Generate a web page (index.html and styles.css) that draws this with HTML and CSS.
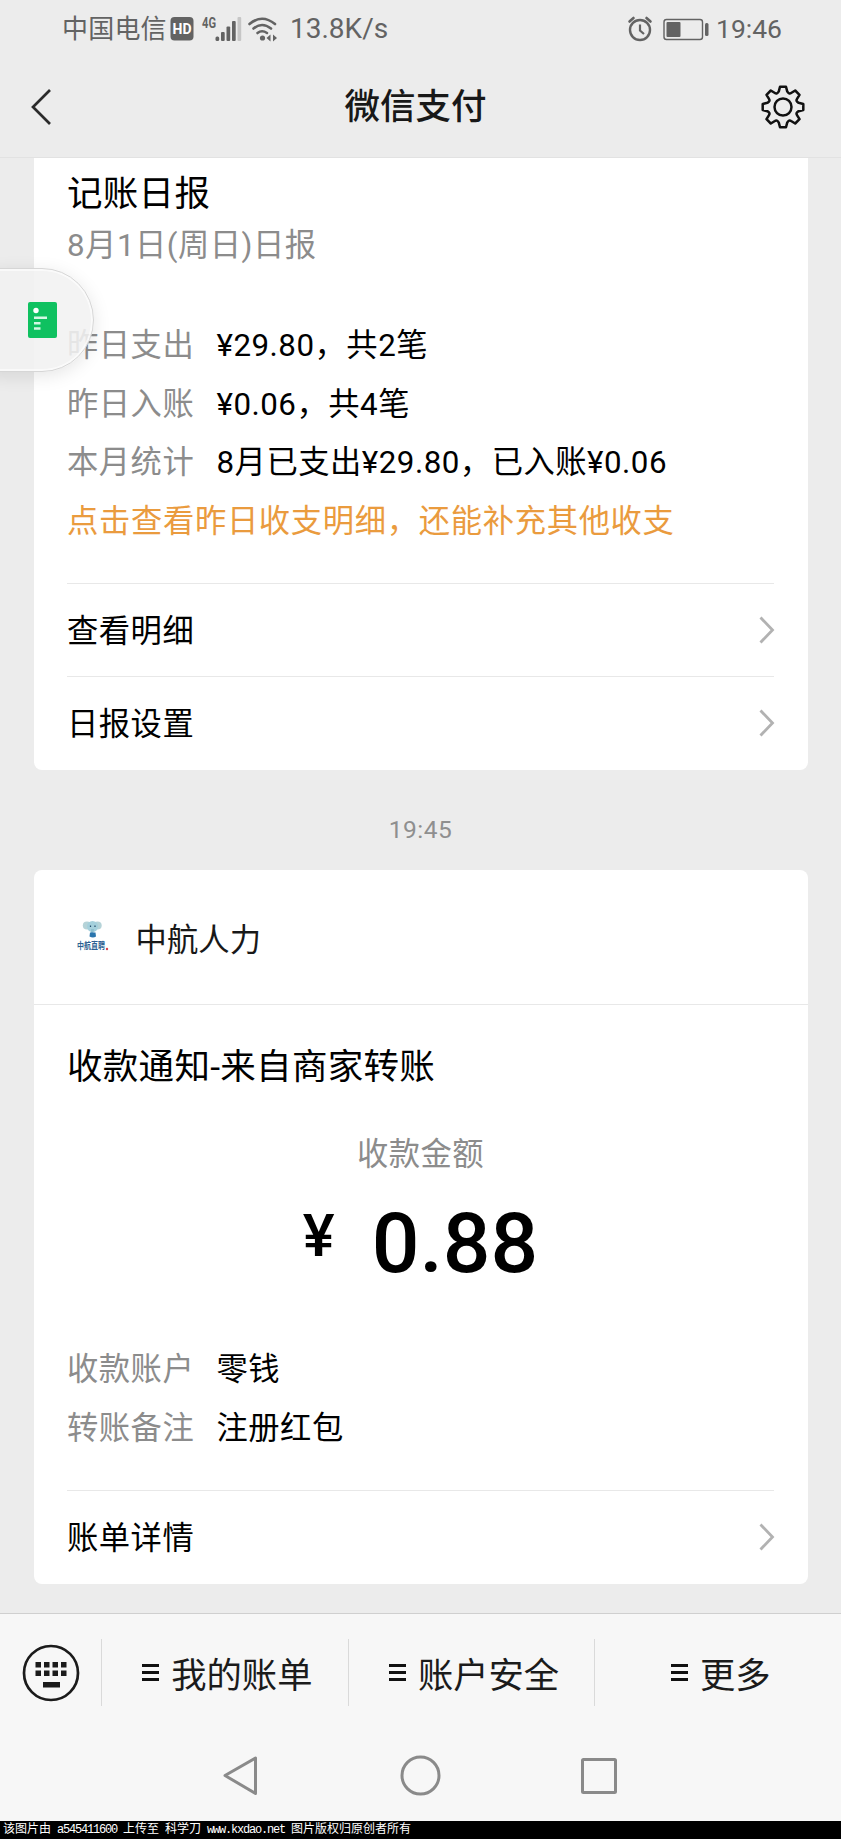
FILE: index.html
```html
<!DOCTYPE html>
<html lang="zh-CN">
<head>
<meta charset="utf-8">
<title>微信支付</title>
<link rel="stylesheet" href="styles.css">
</head>
<body>
<div class="phone">
  <div class="status">
    <span class="carrier">中国电信</span>
    <svg class="status-icons" width="112" height="28" viewBox="170 14 112 28">
      <rect x="170.500" y="16" width="23" height="23.500" rx="4" fill="#636363"/>
      <text x="182" y="33" class="hd" text-anchor="middle" textLength="19" lengthAdjust="spacingAndGlyphs">HD</text>
      <text x="202" y="27" class="g4" textLength="14" lengthAdjust="spacingAndGlyphs">4G</text>
      <g fill="#636363">
        <rect x="215.500" y="35.500" width="3.700" height="4.500" rx="1.500"/>
        <rect x="221" y="31" width="3.700" height="9" rx="1"/>
        <rect x="226.500" y="25.500" width="3.700" height="14.500" rx="1"/>
        <rect x="232" y="20" width="3.700" height="20" rx="1"/>
        <rect x="237.500" y="16" width="3.700" height="24" rx="1" fill="#c6c6c6"/>
      </g>
      <g fill="none" stroke="#636363" stroke-width="2.600" stroke-linecap="round">
        <path d="M249.500 23Q262 12.500 275 23"/>
        <path d="M253.500 27.500Q262 20.500 271 27.500"/>
        <path d="M257.500 32Q262 28.500 267 32"/>
      </g>
      <circle cx="262.500" cy="37" r="2.600" fill="#636363"/>
      <path d="M270.500 33.500v7l-4-3.500zM273 33.500v7l4-3.500z" fill="#636363"/>
    </svg>
    <span class="speed">13.8K/s</span>
    <svg class="battery" width="84" height="28" viewBox="626 14 84 28" fill="none" stroke="#636363">
      <circle cx="640" cy="29" r="10" stroke-width="2.400"/>
      <path d="M640 23.500v6l4 3.500" stroke-width="2.200"/>
      <path d="M629.500 20.500l4-3.500M650.500 20.500l-4-3.500" stroke-width="2.600" stroke-linecap="round"/>
      <rect x="664" y="18.500" width="38.500" height="20" rx="2.500" stroke-width="1.400"/>
      <rect x="666.500" y="21" width="14" height="15" rx="1" fill="#636363" stroke="none"/>
      <rect x="705" y="22" width="3.500" height="13" rx="1.500" fill="#636363" stroke="none"/>
    </svg>
    <span class="clock">19:46</span>
  </div>

  <div class="header">
    <svg class="back" width="24" height="40" viewBox="0 0 24 40"><path d="M21 3L4 20L21 37" fill="none" stroke="#2b2b2b" stroke-width="2.700"/></svg>
    <h1 class="title">微信支付</h1>
    <svg class="gear" width="46" height="46" viewBox="-23 -23 46 46" fill="none" stroke="#111" stroke-width="2.500" stroke-linejoin="round">
      <circle r="8.500"/>
      <path d="M-3-20.300H3L4.200-15.600Q6-12.500 8.100-14L12.200-16.500L16.500-12.200L14-8.100Q12.500-6 15.600-4.200L20.300-3V3L15.600 4.200Q12.500 6 14 8.100L16.500 12.200L12.200 16.500L8.100 14Q6 12.500 4.200 15.600L3 20.300H-3L-4.200 15.600Q-6 12.500-8.100 14L-12.200 16.500L-16.500 12.200L-14 8.100Q-12.500 6-15.600 4.200L-20.300 3V-3L-15.600-4.200Q-12.500-6-14-8.100L-16.500-12.200L-12.200-16.500L-8.100-14Q-6-12.500-4.200-15.600Z"/>
    </svg>
  </div>

  <div class="chat">
    <div class="card report">
      <div class="card-title">记账日报</div>
      <div class="date">8月1日(周日)日报</div>
      <div class="rows">
        <div class="row"><span class="label">昨日支出</span><span>¥29.80，共2笔</span></div>
        <div class="row"><span class="label">昨日入账</span><span>¥0.06，共4笔</span></div>
        <div class="row"><span class="label">本月统计</span><span>8月已支出¥29.80，已入账¥0.06</span></div>
        <div class="row hint">点击查看昨日收支明细，还能补充其他收支</div>
      </div>
      <div class="link"><span>查看明细</span><svg class="chev" width="16" height="28" viewBox="0 0 16 28"><path d="M2.500 1.500L14.500 14L2.500 26.500"/></svg></div>
      <div class="link"><span>日报设置</span><svg class="chev" width="16" height="28" viewBox="0 0 16 28"><path d="M2.500 1.500L14.500 14L2.500 26.500"/></svg></div>
    </div>

    <div class="time">19:45</div>

    <div class="card pay">
      <div class="merchant">
        <svg class="logo" width="34" height="34" viewBox="0 0 34 34">
          <ellipse cx="11" cy="5.500" rx="4.200" ry="4" fill="#b5d3d8"/>
          <ellipse cx="21.500" cy="5.500" rx="4.200" ry="4" fill="#b5d3d8"/>
          <ellipse cx="16.500" cy="6.500" rx="5.500" ry="5.500" fill="#a5d0dc"/>
          <path d="M15 9h3l-1 6h-2z" fill="#8fc0d0"/>
          <path d="M14.500 5.500v1.500M19 5.500v1.500" stroke="#234d6b" stroke-width="1.200"/>
          <path d="M14 12.500h5.500l.5 4q-3 2-6.500 0z" fill="#2b75ad"/>
          <text x="1" y="29" class="logo-text" textLength="28" lengthAdjust="spacingAndGlyphs">中航直聘</text>
          <circle cx="31" cy="29" r="1.200" fill="#d8434e"/>
        </svg>
        <span class="name">中航人力</span>
      </div>
      <div class="pay-body">
        <div class="card-title">收款通知-来自商家转账</div>
        <div class="amount-label">收款金额</div>
        <div class="amount"><span class="yen">¥</span><span class="num">0.88</span></div>
        <div class="rows">
          <div class="row"><span class="label">收款账户</span><span>零钱</span></div>
          <div class="row"><span class="label">转账备注</span><span>注册红包</span></div>
        </div>
        <div class="link"><span>账单详情</span><svg class="chev" width="16" height="28" viewBox="0 0 16 28"><path d="M2.500 1.500L14.500 14L2.500 26.500"/></svg></div>
      </div>
    </div>

    <div class="float">
      <svg width="29" height="36" viewBox="0 0 29 36">
        <rect width="29" height="36" rx="2" fill="#0fc160"/>
        <circle cx="8" cy="8.500" r="2.700" fill="#fff"/>
        <path d="M6 15.700h13M6 21.200h6.500M6 26.500h6.500" stroke="#d5f8e4" stroke-width="2.400"/>
      </svg>
    </div>
  </div>

  <div class="toolbar">
    <div class="key">
      <svg width="58" height="58" viewBox="-29 -29 58 58" fill="#1b1b1b">
        <circle r="27" fill="none" stroke="#1b1b1b" stroke-width="2.700"/>
        <path d="M-15.500-11h5.500v5.500h-5.500zM-7-11h5.500v5.500h-5.500zM1.500-11h5.500v5.500h-5.500zM10-11h5.500v5.500h-5.500zM-15.500-2.500h5.500v5.500h-5.500zM-7-2.500h5.500v5.500h-5.500zM1.500-2.500h5.500v5.500h-5.500zM10-2.500h5.500v5.500h-5.500zM-8 9H9v5.500H-8z"/>
      </svg>
    </div>
    <div class="item"><i class="menu"></i><span>我的账单</span></div>
    <div class="item"><i class="menu"></i><span>账户安全</span></div>
    <div class="item"><i class="menu"></i><span>更多</span></div>
  </div>

  <div class="nav">
    <svg width="841" height="88" viewBox="0 0 841 88" fill="none" stroke="#8a8a8a" stroke-width="3" stroke-linejoin="round">
      <path d="M225 43.500L255.500 26V61.500Z"/>
      <circle cx="420.500" cy="43.500" r="18.500"/>
      <rect x="582.500" y="27.500" width="33" height="33" rx="1"/>
    </svg>
  </div>

  <div class="watermark">该图片由<span class="half"> a545411600 </span>上传至<span class="half"> </span>科学刀<span class="half"> www.kxdao.net </span>图片版权归原创者所有</div>
</div>
</body>
</html>
```

FILE: styles.css
```css
* { box-sizing: border-box; }

body {
  margin: 0;
  background: #ececec;
  color: #000;
  font-family: Roboto, "Noto Sans CJK SC", sans-serif;
}

svg { display: block; flex: none; overflow: visible; }

.phone {
  width: 841px;
  height: 1839px;
  display: flex;
  flex-direction: column;
  overflow: hidden;
  white-space: nowrap;
}

/* status bar */
.status {
  height: 57px;
  display: flex;
  align-items: center;
  padding: 0 56px 0 62px;
  color: #636363;
  font-weight: 400;
}
.carrier { width: 108px; font-size: 26px; line-height: 58px; letter-spacing: .2px; }
.speed { margin-left: 8px; line-height: 59px; font-size: 28px; }
.battery { margin-left: auto; }
.clock { width: 69px; margin-left: 6px; line-height: 59px; font-size: 26.500px; }
.hd { font: 700 15px Roboto, sans-serif; fill: #fff; }
.g4 { font: 700 15px Roboto, sans-serif; fill: #636363; }

/* title bar */
.header {
  height: 101px;
  display: flex;
  align-items: center;
  justify-content: space-between;
  padding: 0 35px 0 29px;
  border-bottom: 1px solid #e2e2e2;
}
.back { margin-right: 18px; }
.title {
  margin: 0;
  font-size: 35.500px;
  font-weight: 500;
  line-height: 50px;
  color: #181818;
}

/* message list */
.chat {
  position: relative;
  height: 1455px;
  padding: 0 33.500px;
  letter-spacing: .5px;
  font-size: 31.300px;
}
.card { background: #fff; border-radius: 8px; }
.report {
  height: 612px;
  border-radius: 0 0 8px 8px;
  padding: 9px 33.500px 0;
}
.card-title { font-size: 35.500px; line-height: 54px; letter-spacing: .3px; }
.date { line-height: 50px; color: #8c8c8c; }
.rows { display: flex; flex-direction: column; }
.report .rows { padding: 46px 0 32px; }
.row { display: flex; height: 58.500px; line-height: 58.500px; }
.label { width: 149.500px; color: #8c8c8c; }
.hint { color: #ea9b3e; letter-spacing: .68px; }
.link {
  height: 93.300px;
  display: flex;
  align-items: center;
  justify-content: space-between;
  border-top: 1px solid #e8e8e8;
}
.link span { padding-bottom: 3px; }
.chev path { fill: none; stroke: #b2b2b2; stroke-width: 2.800; }
.time {
  height: 100px;
  line-height: 120px;
  text-align: center;
  color: #8f8f8f;
  font-size: 24.500px;
}
.pay { height: 714px; }
.merchant {
  height: 135px;
  display: flex;
  align-items: center;
  padding-left: 42px;
  border-bottom: 1px solid #e8e8e8;
  color: #181818;
}
.name { margin-left: 26px; letter-spacing: .1px; }
.logo-text { font: 700 9px "Noto Sans CJK SC", sans-serif; fill: #2b5f92; letter-spacing: 0; }
.pay-body { padding: 35px 33.500px 0; }
.amount-label { margin-top: 36px; line-height: 50px; text-align: center; color: #8c8c8c; }
.amount {
  display: flex;
  justify-content: center;
  height: 130px;
  font-weight: 500;
}
.yen { font-size: 60px; line-height: 111px; width: 69px; letter-spacing: 0; }
.num { font-size: 84px; line-height: 127px; letter-spacing: 0; }
.pay .rows { padding: 31px 0 32px; }

/* docked bubble over the list */
.float {
  position: absolute;
  left: -12px;
  top: 110px;
  width: 106px;
  height: 104px;
  display: flex;
  align-items: center;
  padding-left: 39px;
  background: rgba(241, 241, 241, .88);
  border: 1px solid #d6d6d6;
  border-radius: 0 52px 52px 0;
  box-shadow: 0 4px 18px rgba(0, 0, 0, .1), inset 0 0 0 2px rgba(255, 255, 255, .6);
}

/* bottom menu */
.toolbar {
  height: 119px;
  display: flex;
  padding-top: 25px;
  background: #f7f7f7;
  border-top: 1px solid #cfcfcf;
}
.key { width: 101px; height: 67px; display: flex; align-items: center; padding-left: 22px; }
.item {
  flex: 1;
  height: 67px;
  display: flex;
  align-items: center;
  justify-content: center;
  gap: 12px;
  padding-left: 5px;
  border-left: 1px solid #dadada;
  color: #1b1b1b;
  font-size: 35.300px;
}
.menu {
  width: 17px;
  height: 17px;
  border: solid #111;
  border-width: 3px 0;
  background: linear-gradient(#111, #111) center / 100% 3px no-repeat;
}
.nav { height: 89px; background: #f7f7f7; }

.watermark {
  height: 18px;
  padding-left: 3px;
  background: #000;
  color: #fff;
  font: 12px/18px "Liberation Mono", "Noto Sans CJK SC", monospace;
}
.half { letter-spacing: -1.200px; }
```
